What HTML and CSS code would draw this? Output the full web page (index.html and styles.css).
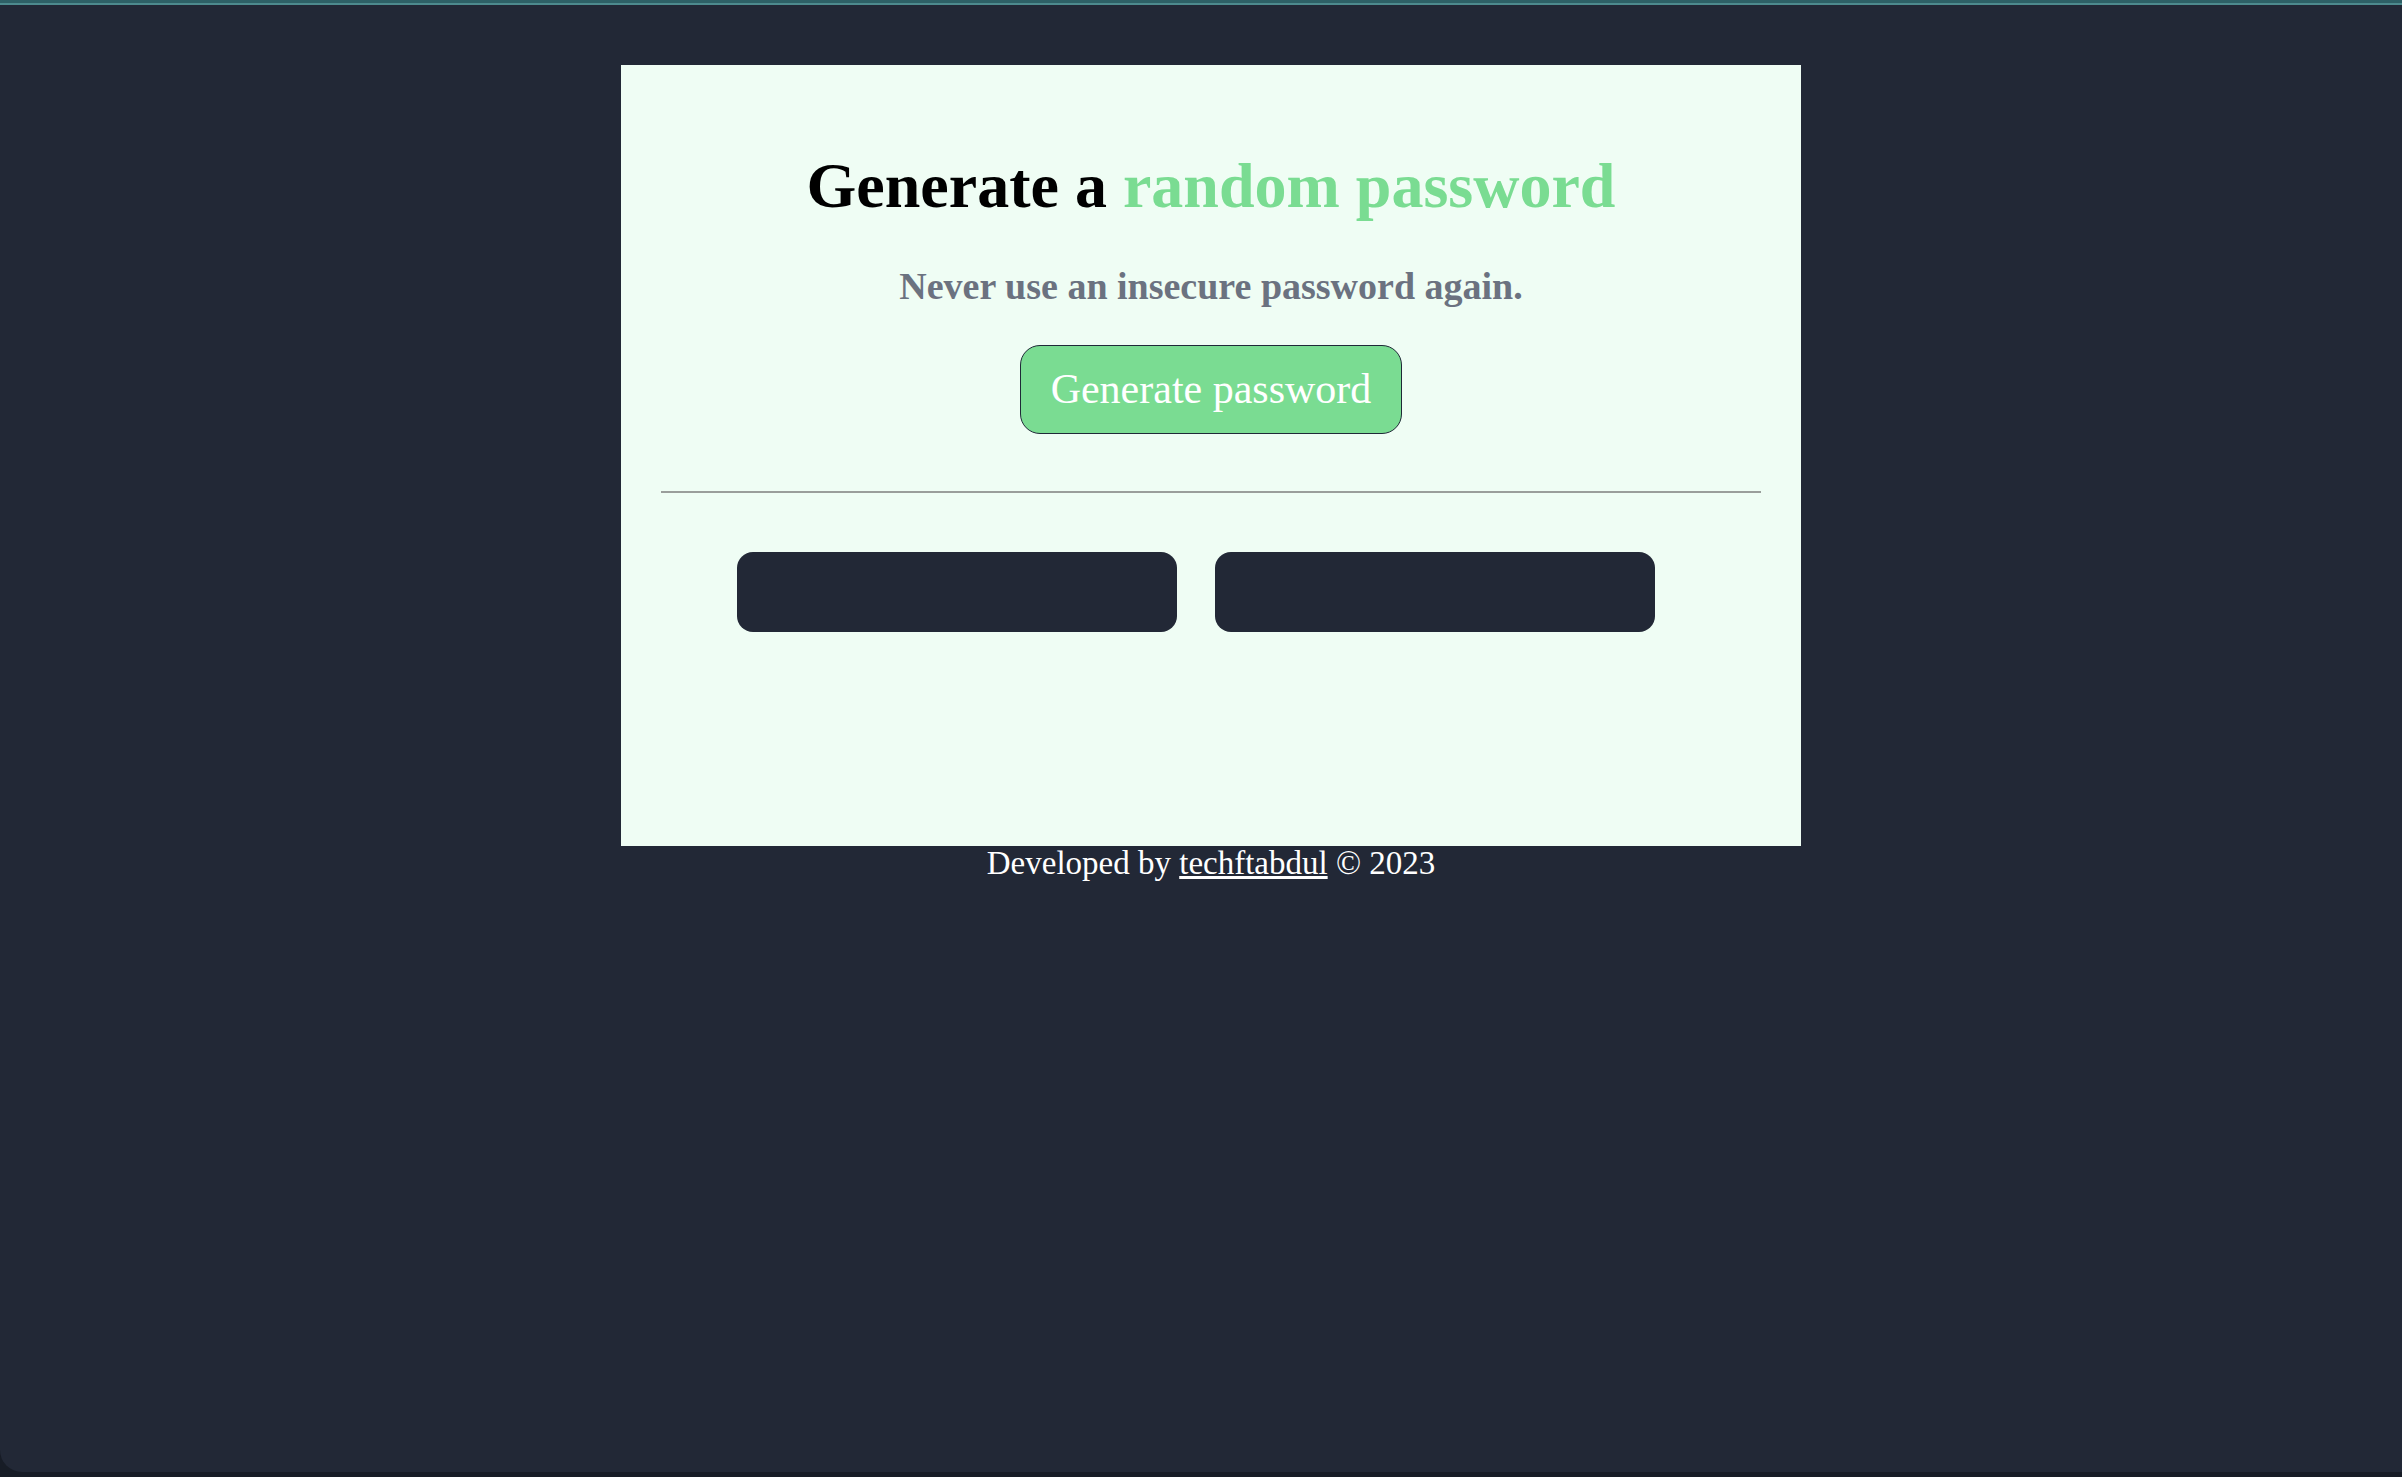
FILE: index.html
```html
<!DOCTYPE html>
<html lang="en">
<head>
<meta charset="utf-8">
<title>Password Generator</title>
<link rel="stylesheet" href="styles.css">
</head>
<body>
<div class="topbar"></div>
<main class="page">
  <section class="card">
    <h1 class="title">Generate a <span class="accent">random password</span></h1>
    <p class="subtitle">Never use an insecure password again.</p>
    <button class="gen-btn" type="button">Generate password</button>
    <hr class="divider">
    <div class="outputs">
      <div class="output"></div>
      <div class="output"></div>
    </div>
  </section>
  <footer class="footer">Developed by <a href="#" class="link">techftabdul</a> © 2023</footer>
</main>
</body>
</html>
```
FILE: styles.css
```css
html {
  background: #171c26;
}
body {
  margin: 0;
  height: 1472px;
  background: #222836;
  border-bottom-left-radius: 22px;
  font-family: "Liberation Serif", "Times New Roman", serif;
  overflow: hidden;
}
.topbar {
  height: 3px;
  background: #2e6066;
  border-bottom: 2px solid #4d8a8e;
}
.page {
  padding-top: 60px;
  padding-left: 20px;
  display: flex;
  flex-direction: column;
  align-items: center;
}
.card {
  width: 1180px;
  box-sizing: border-box;
  background: #effdf4;
  padding: 85px 40px 214px;
  display: flex;
  flex-direction: column;
  align-items: center;
}
.title {
  margin: 0;
  font-size: 64px;
  font-weight: 700;
  line-height: 71px;
  color: #000;
}
.accent {
  color: #7adc92;
}
.subtitle {
  margin: 45px 0 0;
  font-size: 38px;
  font-weight: 700;
  line-height: 41px;
  color: #6b7280;
}
.gen-btn {
  margin-top: 38px;
  font-family: inherit;
  font-size: 42px;
  line-height: 47px;
  padding: 20px 30px;
  color: #fff;
  background: #7adc92;
  border: 1px solid #1f2937;
  border-radius: 20px;
}
.divider {
  align-self: stretch;
  margin: 57px 0 0;
  border: 0;
  height: 2px;
  background: #9a9e9b;
}
.outputs {
  align-self: stretch;
  margin-top: 59px;
  padding-left: 76px;
  display: flex;
  gap: 38px;
}
.output {
  width: 440px;
  height: 80px;
  background: #222836;
  border-radius: 16px;
}
.footer {
  font-size: 33px;
  line-height: 35px;
  color: #fff;
}
.link {
  color: #fff;
}
```
